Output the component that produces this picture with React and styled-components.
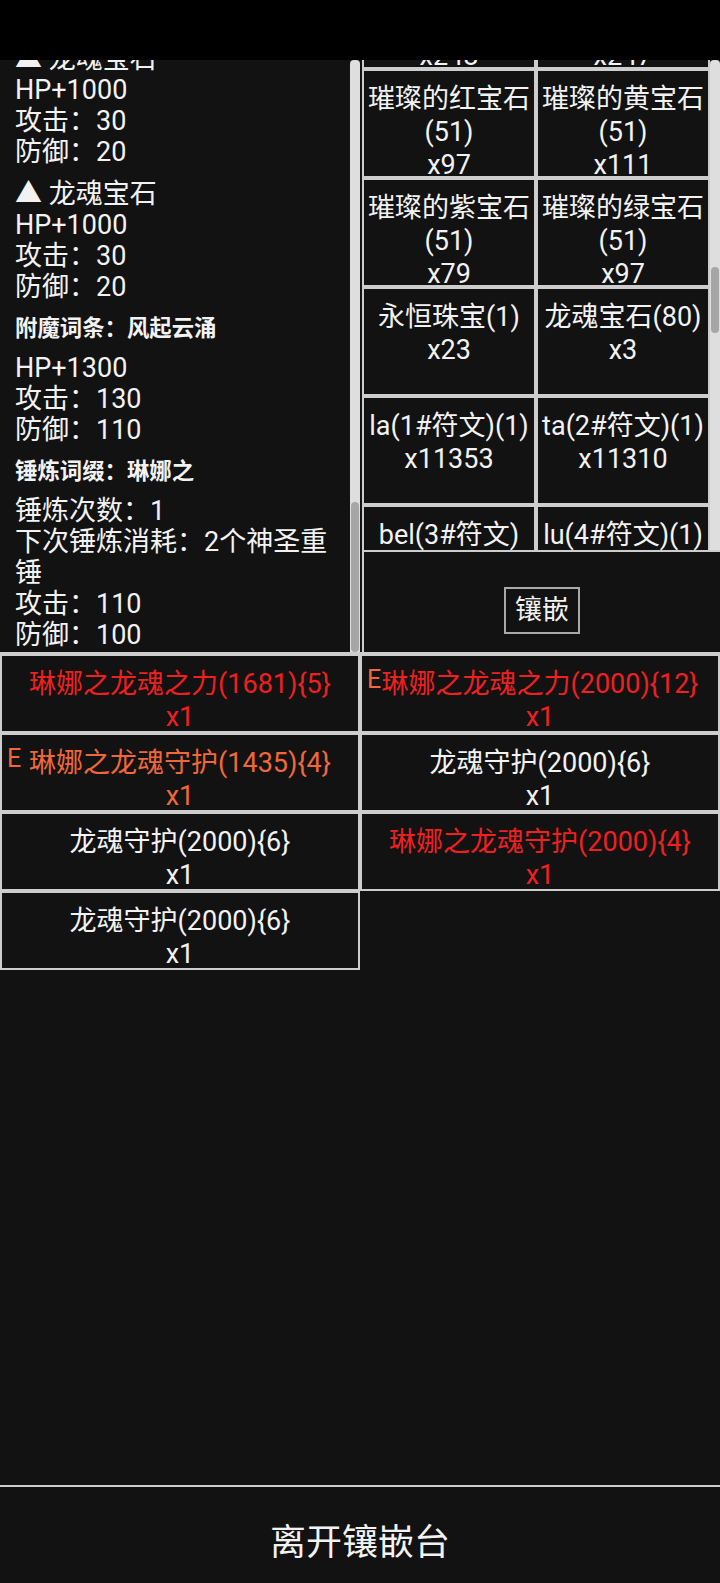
import React, { useLayoutEffect, useRef, useState } from 'react'
import styled, { createGlobalStyle } from 'styled-components'

const LINE = '#cdcdcd'
const GEM_ROW = 109

const GlobalStyle = createGlobalStyle`
  html, body {
    margin: 0;
    padding: 0;
    background: #121212;
  }
  body {
    font-family: Roboto, "Noto Sans CJK SC", sans-serif;
    color: #f2f2f2;
  }
  * {
    box-sizing: border-box;
  }
`

const Page = styled.div`
  display: flex;
  flex-direction: column;
  height: 100vh;
  background: #121212;
`

const StatusBar = styled.div`
  height: 60px;
  flex-shrink: 0;
  background: #000;
`

const Workbench = styled.div`
  display: flex;
  height: 594px;
  flex-shrink: 0;
  border-bottom: 2px solid ${LINE};
`

// a scroll area with its own drawn scrollbar beside it
const ScrollFrame = styled.div`
  display: flex;
  min-height: 0;
  height: ${({ $height }) => $height};
  width: ${({ $width }) => $width};
  flex-shrink: 0;
`

const Scroller = styled.div`
  flex: 1;
  min-width: 0;
  height: 100%;
  overflow-y: auto;
  scrollbar-width: none;
  &::-webkit-scrollbar {
    display: none;
  }
`

const Track = styled.div`
  position: relative;
  width: 10px;
  height: 100%;
  flex-shrink: 0;
  background: #dedede;
  border-radius: 4px 4px 0 0;
`

const Thumb = styled.div`
  position: absolute;
  left: 1px;
  right: 1px;
  border-radius: 5px;
  background: #a6a6a6;
`

const DetailPane = styled(Scroller)`
  padding: 30px 15px 1px 15px;
`

const DetailList = styled.div`
  display: flex;
  flex-direction: column;
  gap: 11px;
`

const StatBlock = styled.div`
  display: flex;
  flex-direction: column;
`

const Line = styled.div`
  font-size: 27px;
  line-height: 31px;
`

const SectionTitle = styled.div`
  font-size: 22.4px;
  line-height: 28px;
  font-weight: bold;
`

const SocketColumn = styled.div`
  width: 360px;
  height: 100%;
  padding-left: 2px;
  display: flex;
  flex-direction: column;
`

const GemFrame = styled(ScrollFrame)`
  border-bottom: 2px solid ${LINE};
`

const ItemGrid = styled.div`
  display: grid;
  grid-template-columns: 1fr 1fr;
  grid-auto-rows: ${({ $row }) => $row}px;
`

const toneColor = {
  normal: '#f2f2f2',
  red: '#ee2020',
  orange: '#f0683a',
}

const ItemCell = styled.div`
  position: relative;
  overflow: hidden;
  border: 2px solid ${LINE};
  padding: 12px 2px 0;
  font-size: 27px;
  line-height: 33px;
  text-align: center;
  color: ${({ $tone }) => toneColor[$tone || 'normal']};
`

const EnchantMark = styled.span`
  position: absolute;
  top: 11px;
  left: 5px;
  font-size: 25px;
  line-height: 25px;
  color: ${toneColor.orange};
`

const ActionArea = styled.div`
  flex: 1;
  display: flex;
  justify-content: center;
  align-items: flex-start;
  padding-top: 35px;
  border-left: 2px solid ${LINE};
`

const InlayButton = styled.button`
  font-family: Roboto, "Noto Sans CJK SC", sans-serif;
  font-size: 27px;
  line-height: 33px;
  padding: 5px 9px;
  margin: 0;
  color: #f2f2f2;
  background: transparent;
  border: 2px solid #a9a9a9;
  border-radius: 0;
`

const Spacer = styled.div`
  flex: 1;
`

const LeaveBar = styled.div`
  height: 98px;
  flex-shrink: 0;
  display: flex;
  justify-content: center;
  align-items: center;
  padding-top: 8px;
  border-top: 2px solid ${LINE};
  font-size: 36px;
  color: #f2f2f2;
`

const gemStats = ['HP+1000', '攻击：30', '防御：20']

const qualities = ['碎裂的', '裂开的', '普通的', '无瑕的', '完美的', '华丽的']
const colors = ['红', '黄', '紫', '绿']
const hiddenTop = []
qualities.forEach((q, qi) => {
  colors.forEach((c, ci) => {
    hiddenTop.push({ name: `${q}${c}宝石(${qi * 10 + 1})`, count: `x${(qi + 3) * 37 + ci * 13}` })
  })
})
hiddenTop.push({ name: '璀璨的蓝宝石(51)', count: 'x186' })
hiddenTop.push({ name: '璀璨的白宝石(51)', count: 'x203' })
hiddenTop.push({ name: '璀璨的骷髅(51)', count: 'x248' })
hiddenTop.push({ name: '璀璨的钻石(51)', count: 'x247' })

const visibleGems = [
  { name: '璀璨的红宝石(51)', count: 'x97' },
  { name: '璀璨的黄宝石(51)', count: 'x111' },
  { name: '璀璨的紫宝石(51)', count: 'x79' },
  { name: '璀璨的绿宝石(51)', count: 'x97' },
  { name: '永恒珠宝(1)', count: 'x23' },
  { name: '龙魂宝石(80)', count: 'x3' },
  { name: 'la(1#符文)(1)', count: 'x11353' },
  { name: 'ta(2#符文)(1)', count: 'x11310' },
  { name: 'bel(3#符文)(1)', count: 'x11298' },
  { name: 'lu(4#符文)(1)', count: 'x11276' },
]

const runeSyllables = ['mo', 'ne', 'ri', 'so', 'ka', 'vi', 'do', 'ze', 'fu', 'gi', 'ha', 'jo', 'pe', 'qu',
  'ru', 'si', 'ti', 'wu', 'xe', 'yo', 'za', 'bo', 'ce', 'di', 'ek', 'fo', 'gu', 'hi']
const hiddenBottom = runeSyllables.map((s, i) => ({
  name: `${s}(${i + 5}#符文)(1)`,
  count: `x${11250 - i * 397}`,
}))

const gems = [...hiddenTop, ...visibleGems, ...hiddenBottom]

const inventory = [
  { name: '琳娜之龙魂之力(1681){5}', tone: 'red' },
  { name: '琳娜之龙魂之力(2000){12}', tone: 'red', enchanted: true },
  { name: '琳娜之龙魂守护(1435){4}', tone: 'orange', enchanted: true },
  { name: '龙魂守护(2000){6}' },
  { name: '龙魂守护(2000){6}' },
  { name: '琳娜之龙魂守护(2000){4}', tone: 'red' },
  { name: '龙魂守护(2000){6}' },
]

function measureThumb(el) {
  if (!el) return { top: 0, height: 0 }
  const track = el.clientHeight
  const ratio = el.clientHeight / el.scrollHeight
  return {
    top: (el.scrollTop / el.scrollHeight) * track,
    height: Math.max(track * ratio, 20),
  }
}

function ItemDetail() {
  return (
    <DetailList>
      <SectionTitle>琳娜之龙魂守护(2000){4}</SectionTitle>
      <StatBlock>
        <Line>等级：2000</Line>
        <Line>HP+8000</Line>
        <Line>攻击：500</Line>
        <Line>防御：600</Line>
      </StatBlock>
      <SectionTitle>镶嵌宝石：13/13</SectionTitle>
      {Array.from({ length: 13 }).map((_, i) => (
        <StatBlock key={i}>
          <Line>▲ 龙魂宝石</Line>
          {gemStats.map((s) => (
            <Line key={s}>{s}</Line>
          ))}
        </StatBlock>
      ))}
      <SectionTitle>附魔词条：风起云涌</SectionTitle>
      <StatBlock>
        <Line>HP+1300</Line>
        <Line>攻击：130</Line>
        <Line>防御：110</Line>
      </StatBlock>
      <SectionTitle>锤炼词缀：琳娜之</SectionTitle>
      <StatBlock>
        <Line>锤炼次数：1</Line>
        <Line>下次锤炼消耗：2个神圣重锤</Line>
        <Line>攻击：110</Line>
        <Line>防御：100</Line>
      </StatBlock>
    </DetailList>
  )
}

export default function App() {
  const detailRef = useRef(null)
  const gemRef = useRef(null)
  const [thumbs, setThumbs] = useState({ detail: null, gem: null })

  useLayoutEffect(() => {
    const d = detailRef.current
    const g = gemRef.current
    if (d) d.scrollTop = d.scrollHeight
    if (g) g.scrollTop = 14 * GEM_ROW - 9
    setThumbs({ detail: measureThumb(d), gem: measureThumb(g) })
  }, [])

  return (
    <>
      <GlobalStyle />
      <Page>
        <StatusBar />
        <Workbench>
          <ScrollFrame $width="360px" $height="100%">
            <DetailPane ref={detailRef}>
              <ItemDetail />
            </DetailPane>
            <Track>
              {thumbs.detail && <Thumb style={{ top: thumbs.detail.top, height: thumbs.detail.height }} />}
            </Track>
          </ScrollFrame>
          <SocketColumn>
            <GemFrame $width="100%" $height="492px">
              <Scroller ref={gemRef}>
                <ItemGrid $row={GEM_ROW}>
                  {gems.map((g, i) => (
                    <ItemCell key={i}>
                      {g.name}
                      <br />
                      {g.count}
                    </ItemCell>
                  ))}
                </ItemGrid>
              </Scroller>
              <Track>
                {thumbs.gem && <Thumb style={{ top: thumbs.gem.top, height: thumbs.gem.height }} />}
              </Track>
            </GemFrame>
            <ActionArea>
              <InlayButton>镶嵌</InlayButton>
            </ActionArea>
          </SocketColumn>
        </Workbench>
        <ItemGrid $row={79}>
          {inventory.map((it, i) => (
            <ItemCell key={i} $tone={it.tone}>
              {it.enchanted && <EnchantMark>E</EnchantMark>}
              {it.name}
              <br />
              x1
            </ItemCell>
          ))}
        </ItemGrid>
        <Spacer />
        <LeaveBar>离开镶嵌台</LeaveBar>
      </Page>
    </>
  )
}
